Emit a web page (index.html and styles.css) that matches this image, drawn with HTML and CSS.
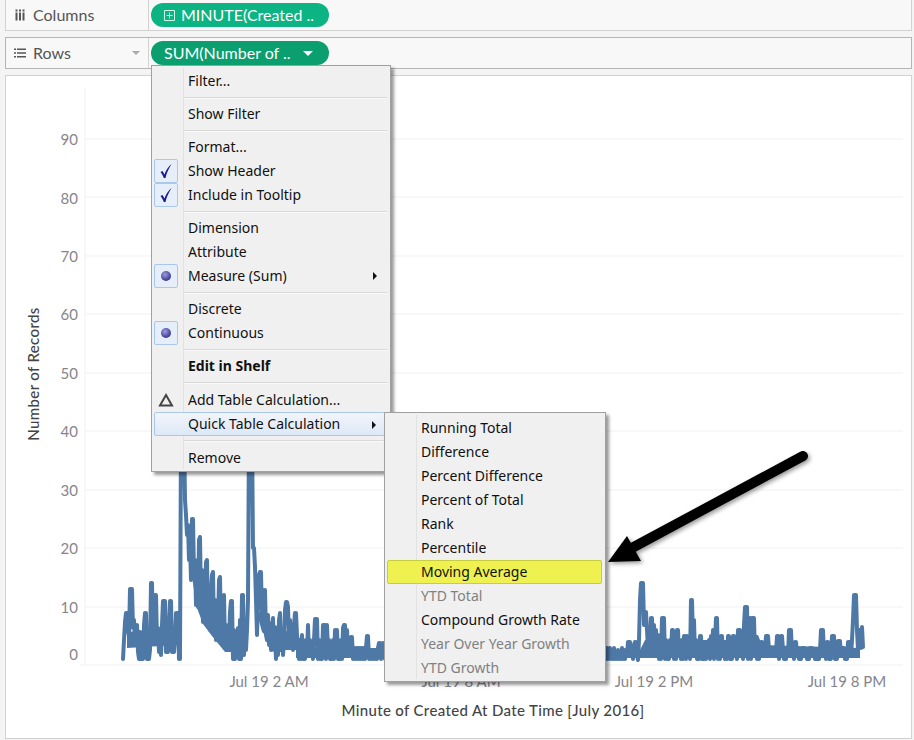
FILE: index.html
```html
<!DOCTYPE html>
<html lang="en">
<head>
    <meta charset="UTF-8">
    <meta name="viewport" content="width=device-width, initial-scale=1.0">
    <title>Number of Records</title>
    <link rel="stylesheet" href="styles.css">
</head>
<body>

    <div class="shelf shelf-columns">
        <div class="shelf-label">
            <svg class="shelf-icon" width="12" height="12" viewBox="0 0 12 12"><path d="M1.5 3.5h2v8h-2zM5 3.5h2v8H5zM8.5 3.5h2v8h-2zM1.5.5h2v2h-2zM5 .5h2v2H5zM8.5 .5h2v2h-2z"/></svg>
            <span>Columns</span>
        </div>
        <div class="pill pill-columns">
            <svg class="pill-plus" width="11" height="11" viewBox="0 0 11 11"><path d="M.5.5h10v10H.5zM5.5 2.5v6M2.5 5.5h6"/></svg>
            <span>MINUTE(Created ..</span>
        </div>
    </div>

    <div class="shelf shelf-rows">
        <div class="shelf-label">
            <svg class="shelf-icon" width="12" height="12" viewBox="0 0 12 12"><path d="M0 1.500h2v1.500H0zM3 1.500h9v1.500H3zM0 5.200h2v1.500H0zM3 5.200h9v1.500H3zM0 9h2v1.500H0zM3 9h9v1.500H3z"/></svg>
            <span>Rows</span>
            <i class="shelf-caret"></i>
        </div>
        <div class="pill pill-rows">
            <span>SUM(Number of ..</span>
            <i class="pill-caret"></i>
        </div>
    </div>

    <div class="pane">
        <svg class="chart" width="905" height="661" viewBox="6 76 905 661">
            <g class="grid">
                <path d="M85 88V665"/>
                <path d="M85 139H903M85 197H903M85 256H903M85 314H903M85 373H903M85 431H903M85 490H903M85 548H903M85 607H903M80 665H903"/>
            </g>
            <g class="tick tick-y">
                <text x="78" y="145">90</text>
                <text x="78" y="204">80</text>
                <text x="78" y="262">70</text>
                <text x="78" y="320">60</text>
                <text x="78" y="379">50</text>
                <text x="78" y="437">40</text>
                <text x="78" y="496">30</text>
                <text x="78" y="554">20</text>
                <text x="78" y="613">10</text>
                <text x="78" y="660">0</text>
            </g>
            <g class="tick tick-x">
                <text x="269" y="687">Jul 19 2 AM</text>
                <text x="461" y="687">Jul 19 8 AM</text>
                <text x="654" y="687">Jul 19 2 PM</text>
                <text x="847" y="687">Jul 19 8 PM</text>
            </g>
            <text class="axis-title" x="493" y="716">Minute of Created At Date Time [July 2016]</text>
            <text class="axis-title" transform="translate(39 374) rotate(-90)">Number of Records</text>
            <!-- the minutes are too dense to tell apart here, so the solid core is a filled shape -->
            <path class="series-core" d="M127 632 178 628V645L127 648zM188 530 196 580 205 600 215 620 230 635 246 640V652H225L212 636 203 624 197 608 190 565zM256 610 275 625 300 638V650H280L262 632zM296 648H385V658H296zM606 650H640L645 640H735L745 635H758L762 645 860 648V658H606z"/>
            <polyline class="series" points="123,659 124,640 125,622 126,613 127,613 128,630 129,636 130,589 131,589 132,589 133,628 134,620 135,642 136,626 137,625 138,652 139,659 140,632 141,659 142,640 143,659 144,625 145,613 146,613 147,659 148,640 149,659 150,650 151,583 152,583 153,640 154,610 155,595 156,595 157,640 158,628 159,652 160,636 161,655 162,625 163,601 164,601 165,601 166,652 167,635 168,652 169,625 170,601 171,601 172,652 173,630 174,652 175,640 176,613 177,613 178,613 179,659 180,659 181,430 184,430 185,500 186,515 187,535 188,525 189,560 190,545 191,580 192,519 193,519 194,575 195,560 196,605 197,575 198,607 199,540 200,537 201,600 202,570 203,622 204,585 205,605 206,562 207,560 208,625 209,600 210,630 211,590 212,575 213,572 214,632 215,600 216,640 217,610 218,625 219,580 220,577 221,632 222,610 223,645 224,595 225,647 226,625 227,640 228,630 229,640 230,612 231,601 232,601 233,659 234,630 235,659 236,635 237,655 238,628 239,659 240,620 241,659 242,595 243,595 244,655 245,625 246,650 247,630 248,600 249,430 252,430 253,548 254,548 255,567 256,600 257,635 258,600 259,575 260,572 261,572 262,620 263,590 264,628 265,590 266,635 267,640 268,615 269,645 270,625 271,650 272,630 273,618 274,650 275,635 276,659 277,630 278,655 279,620 280,613 281,650 282,630 283,655 284,640 285,610 286,602 287,602 288,607 289,640 290,620 291,645 292,630 293,650 294,625 295,613 296,613 297,635 298,650 299,659 300,640 301,659 302,635 303,659 304,645 305,659 306,640 307,655 308,625 309,655 310,640 311,650 312,645 313,659 314,640 315,619 316,619 317,619 318,659 319,640 320,659 321,645 322,659 323,625 324,625 325,625 326,659 327,625 328,650 329,640 330,659 331,645 332,659 333,640 334,659 335,630 336,655 337,630 338,659 339,645 340,659 341,640 342,659 343,628 344,625 345,625 346,655 347,630 348,650 349,640 350,655 351,637 352,637 353,659 354,648 355,659 356,648 357,659 358,648 359,659 360,648 361,659 362,648 363,659 364,648 365,659 366,648 367,636 368,636 369,659 370,650 371,659 372,650 373,659 374,650 375,659 376,650 377,659 378,648 379,643 380,643 381,659 382,645 383,643 384,650 385,659 606,659 607,648 608,659 609,650 610,648 611,659 612,650 613,659 614,648 615,659 616,652 617,659 618,650 619,659 620,652 621,659 622,648 623,659 624,650 625,659 626,650 627,655 628,642 629,642 630,642 631,655 632,648 633,659 634,645 635,642 636,642 637,655 638,660 639,640 640,600 641,583 642,583 643,583 644,625 645,612 646,612 647,630 648,650 649,635 650,652 651,618 652,618 653,650 654,625 655,655 656,630 657,652 658,635 659,659 660,640 661,659 662,618 663,618 664,618 665,659 666,640 667,659 668,645 669,659 670,640 671,655 672,630 673,630 674,659 675,640 676,659 677,630 678,630 679,655 680,645 681,659 682,640 683,659 684,636 685,636 686,659 687,636 688,655 689,640 690,659 691,600 692,600 693,640 694,620 695,655 696,640 697,659 698,645 699,659 700,636 701,636 702,659 703,645 704,659 705,650 706,659 707,645 708,655 709,640 710,659 711,636 712,650 713,630 714,659 715,640 716,618 717,618 718,659 719,640 720,659 721,636 722,636 723,655 724,645 725,659 726,648 727,659 728,636 729,636 730,659 731,645 732,659 733,636 734,636 735,655 736,645 737,659 738,630 739,630 740,630 741,650 742,640 743,659 744,625 745,607 746,607 747,607 748,659 749,618 750,618 751,659 752,618 753,618 754,618 755,655 756,642 757,659 758,648 759,659 760,648 761,642 762,642 763,655 764,648 765,652 766,636 767,636 768,636 769,650 770,654 771,648 772,654 773,650 774,654 775,648 776,652 777,636 778,636 779,659 780,645 781,636 782,636 783,650 784,659 785,648 786,659 787,648 788,655 789,630 790,630 791,630 792,655 793,648 794,659 795,642 796,642 797,655 798,650 799,659 800,652 801,659 802,652 803,648 804,648 805,655 806,652 807,659 808,652 809,659 810,648 811,648 812,648 813,655 814,652 815,659 816,652 817,659 818,652 819,659 820,650 821,630 822,630 823,630 824,655 825,648 826,659 827,642 828,642 829,659 830,648 831,659 832,636 833,636 834,636 835,659 836,648 837,659 838,641 839,641 840,641 841,655 842,648 843,648 844,648 845,659 846,652 847,659 848,642 849,642 850,642 851,655 852,640 853,620 854,595 855,595 856,595 857,630 858,650 859,630 860,630 861,648 862,627 863,647"/>
        </svg>
    </div>

    <div class="menu menu-main">
        <div class="menu-item">Filter...</div>
        <div class="menu-sep"></div>
        <div class="menu-item">Show Filter</div>
        <div class="menu-sep"></div>
        <div class="menu-item">Format...</div>
        <div class="menu-item">
            <span class="mark"><svg width="16" height="18" viewBox="0 0 16 18"><path d="M2.500 10 4.500 9 6.500 12.500C8 8 10.500 4.500 13.500 2 11 6 8.500 11 7.500 16H5.800C5 13.500 3.800 11.500 2.500 10z"/></svg></span>
            Show Header
        </div>
        <div class="menu-item">
            <span class="mark"><svg width="16" height="18" viewBox="0 0 16 18"><path d="M2.500 10 4.500 9 6.500 12.500C8 8 10.500 4.500 13.500 2 11 6 8.500 11 7.500 16H5.800C5 13.500 3.800 11.500 2.500 10z"/></svg></span>
            Include in Tooltip
        </div>
        <div class="menu-sep"></div>
        <div class="menu-item">Dimension</div>
        <div class="menu-item">Attribute</div>
        <div class="menu-item">
            <span class="mark"><i class="radio"></i></span>
            Measure (Sum)
            <i class="more"></i>
        </div>
        <div class="menu-sep"></div>
        <div class="menu-item">Discrete</div>
        <div class="menu-item">
            <span class="mark"><i class="radio"></i></span>
            Continuous
        </div>
        <div class="menu-sep"></div>
        <div class="menu-item menu-bold">Edit in Shelf</div>
        <div class="menu-sep"></div>
        <div class="menu-item menu-tall">
            <svg class="delta" width="16" height="14" viewBox="0 0 16 14"><path d="M8 2 14 12.500H2z"/></svg>
            Add Table Calculation...
        </div>
        <div class="menu-item menu-active">
            Quick Table Calculation
            <i class="more"></i>
        </div>
        <div class="menu-sep"></div>
        <div class="menu-item menu-last">Remove</div>
    </div>

    <div class="menu menu-sub">
        <div class="menu-item">Running Total</div>
        <div class="menu-item">Difference</div>
        <div class="menu-item">Percent Difference</div>
        <div class="menu-item">Percent of Total</div>
        <div class="menu-item">Rank</div>
        <div class="menu-item">Percentile</div>
        <div class="menu-item menu-yellow">Moving Average</div>
        <div class="menu-item menu-off">YTD Total</div>
        <div class="menu-item">Compound Growth Rate</div>
        <div class="menu-item menu-off">Year Over Year Growth</div>
        <div class="menu-item menu-off">YTD Growth</div>
    </div>

    <svg class="arrow" width="220" height="125" viewBox="600 445 220 125">
        <path class="arrow-shaft" d="M803 456 630 549"/>
        <path class="arrow-head" d="M608 562 627 536 641 561z"/>
    </svg>

</body>
</html>
```

FILE: styles.css
```css
body {
    margin: 0;
    width: 914px;
    height: 740px;
    overflow: hidden;
    position: relative;
    background-color: #f4f4f4;
    font-family: "Noto Sans", sans-serif;
}

/* shelves */
.shelf {
    display: flex;
    align-items: center;
    box-sizing: border-box;
    width: 907px;
    margin-left: 5px;
    background-color: #f8f8f8;
    border: 1px solid #d2d2d2;
}
.shelf-columns {
    height: 31px;
    border-top: none;
    margin-bottom: 6px;
}
.shelf-rows {
    height: 32px;
    border-color: #b4b4b4;
    margin-bottom: 6px;
}
.shelf-label {
    display: flex;
    align-items: center;
    gap: 7px;
    box-sizing: border-box;
    width: 143px;
    height: 100%;
    padding-left: 8px;
    margin-right: 2px;
    border-right: 1px solid #d2d2d2;
    color: #555;
    font-family: Lato, sans-serif;
    font-size: 16px;
}
.shelf-label span,
.pill span {
    margin-top: -2px;
}
.shelf-icon {
    fill: #555;
}
.shelf-caret {
    margin-left: auto;
    margin-right: 8px;
    border-top: 4px solid #aaa;
    border-left: 4px solid transparent;
    border-right: 4px solid transparent;
}

.pill {
    display: flex;
    align-items: center;
    box-sizing: border-box;
    width: 178px;
    height: 24px;
    border-radius: 12px;
    color: #fff;
    font-family: Lato, sans-serif;
    font-size: 16px;
}
.pill-columns {
    background-color: #0cb383;
    padding-left: 13px;
    gap: 6px;
}
.pill-rows {
    background-color: #0b9e6e;
    padding-left: 13px;
}
.pill-plus {
    fill: none;
    stroke: #d6f5ea;
}
.pill-caret {
    margin-left: 12px;
    border-top: 5px solid #fff;
    border-left: 5px solid transparent;
    border-right: 5px solid transparent;
}

/* chart pane */
.pane {
    box-sizing: border-box;
    width: 907px;
    height: 664px;
    margin-left: 5px;
    background-color: #fff;
    border: 1px solid #d2d2d2;
}
.chart {
    display: block;
}
.grid path {
    fill: none;
    stroke: #f1f1f1;
    stroke-width: 1;
}
.tick {
    fill: #85858d;
    font-family: Lato, sans-serif;
    font-size: 15px;
}
.tick-y text {
    text-anchor: end;
}
.tick-x text {
    text-anchor: middle;
}
.axis-title {
    fill: #444;
    text-anchor: middle;
    font-family: Lato, sans-serif;
    font-size: 15px;
    letter-spacing: 0.35px;
    font-weight: 500;
}
.series {
    fill: none;
    stroke: #4e79a7;
    stroke-width: 4;
    stroke-linejoin: round;
    stroke-linecap: round;
}
.series-core {
    fill: #4e79a7;
}

/* context menus */
.menu {
    position: absolute;
    box-sizing: border-box;
    background-color: #f0f0f0;
    border: 1px solid #a0a0a0;
    box-shadow: 3px 3px 3px rgba(0, 0, 0, 0.4);
    font-size: 14px;
    color: #111;
}
.menu::before {
    content: "";
    position: absolute;
    top: 2px;
    bottom: 2px;
    width: 1px;
    background-color: #e2e2e2;
}
.menu-main {
    left: 151px;
    top: 65px;
    width: 240px;
    height: 407px;
    padding-top: 3px;
}
.menu-main::before {
    left: 31px;
}
.menu-sub {
    left: 384px;
    top: 412px;
    width: 222px;
    height: 270px;
    padding-top: 3px;
}
.menu-sub::before {
    left: 31px;
}
.menu-item {
    position: relative;
    height: 24px;
    line-height: 24px;
    padding-left: 36px;
    white-space: nowrap;
}
.menu-sep {
    height: 1px;
    margin: 4px 3px 3px 32px;
    background-color: #d8d8d8;
    border-bottom: 1px solid #fafafa;
}
.menu-bold {
    font-weight: 700;
}
.menu-tall {
    height: 25px;
    line-height: 25px;
}
.menu-last {
    line-height: 26px;
}
.menu-off {
    color: #808080;
}
.menu-active {
    margin-left: 2px;
    padding-left: 33px;
    box-sizing: border-box;
    border: 1px solid #a9c8ee;
    border-radius: 2px;
    line-height: 22px;
    background: linear-gradient(#f2f5fa, #dde8f7);
}
.menu-yellow {
    margin: 0 3px 0 2px;
    padding-left: 33px;
    box-sizing: border-box;
    border: 1px solid #c6cd3e;
    border-radius: 2px;
    line-height: 22px;
    background-color: #eef150;
}
.mark {
    position: absolute;
    left: 2px;
    top: 0;
    box-sizing: border-box;
    display: flex;
    align-items: center;
    justify-content: center;
    width: 24px;
    height: 24px;
    background-color: #e6eefa;
    border: 1px solid #a9c8ee;
    border-radius: 2px;
}
.mark path {
    fill: #1c1c8e;
}
.radio {
    width: 10px;
    height: 10px;
    border-radius: 50%;
    background: radial-gradient(circle at 40% 35%, #9c9ce0, #3c3c90 70%);
}
.delta {
    position: absolute;
    left: 6px;
    top: 6px;
    fill: none;
    stroke: #444;
    stroke-width: 2;
}
.more {
    position: absolute;
    right: 13px;
    top: 8px;
    border-left: 4px solid #111;
    border-top: 4px solid transparent;
    border-bottom: 4px solid transparent;
}

/* annotation */
.arrow {
    position: absolute;
    left: 600px;
    top: 445px;
    filter: drop-shadow(2px 2px 2px rgba(0, 0, 0, 0.4));
}
.arrow-shaft {
    fill: none;
    stroke: #000;
    stroke-width: 10;
    stroke-linecap: round;
}
.arrow-head {
    fill: #000;
}
```
